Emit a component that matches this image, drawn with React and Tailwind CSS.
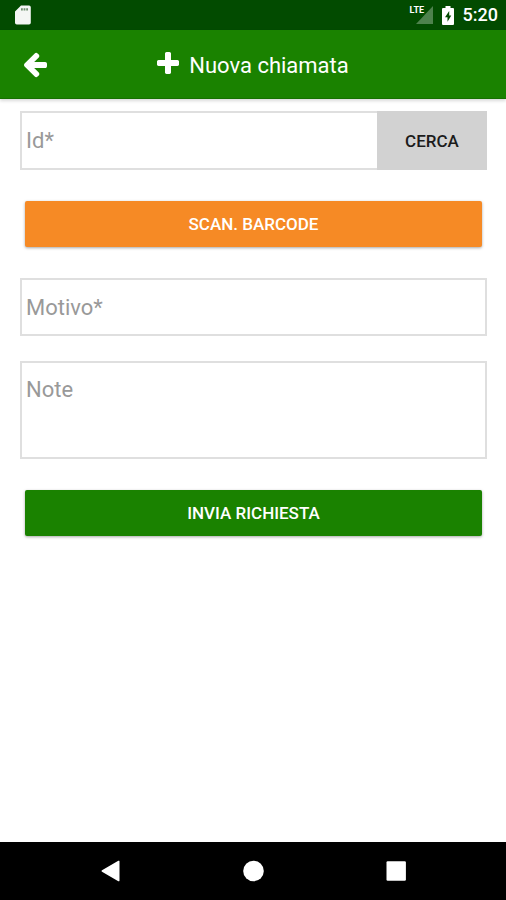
import React, { useState } from "react";

const ArrowLeftIcon = () => (
  <svg viewBox="0 0 1792 1792" className="size-7" fill="currentColor" aria-hidden="true">
    <path d="M1664 896v128q0 53-32.5 90.5t-84.5 37.5h-704l293 294q38 36 38 90t-38 90l-75 76q-37 37-90 37-52 0-91-37l-651-652q-37-37-37-90 0-52 37-91l651-650q38-38 91-38 52 0 90 38l75 74q38 38 38 91t-38 91l-293 293h704q52 0 84.5 37.5t32.5 90.5z" />
  </svg>
);

const PlusIcon = () => (
  <svg viewBox="0 0 1792 1792" className="size-7" fill="currentColor" aria-hidden="true">
    <path d="M1600 736v192q0 40-28 68t-68 28h-416v416q0 40-28 68t-68 28h-192q-40 0-68-28t-28-68v-416h-416q-40 0-68-28t-28-68v-192q0-40 28-68t68-28h416v-416q0-40 28-68t68-28h192q40 0 68 28t28 68v416h416q40 0 68 28t28 68z" />
  </svg>
);

const StatusBar = () => (
  <div className="flex h-[30px] items-center justify-between bg-[#024b00] pr-2 pl-[15px] text-white">
    <svg viewBox="0 0 16 20" className="h-5 w-4" aria-hidden="true">
      <path d="M6 0.5h8a1.8 1.8 0 0 1 1.8 1.8v15.4a1.8 1.8 0 0 1-1.8 1.8H1.8A1.8 1.8 0 0 1 0 17.7V6.5z" fill="#f4f6f4" />
      <path d="M6 3.2h1.8v2.2H6zM8.6 3.2h1.8v2.2H8.6zM11.2 3.2h1.8v2.2h-1.8z" fill="#6f8f6e" />
    </svg>
    <div className="flex items-center">
      <div className="relative h-[18px] w-[23px]">
        <svg viewBox="0 0 23 18" className="h-full w-full" aria-hidden="true">
          <path d="M23 0v18H6z" fill="#4e824d" />
        </svg>
        <span className="absolute top-0 left-0 text-[9px] leading-[9px] font-bold">LTE</span>
      </div>
      <svg viewBox="0 0 12 19" className="ml-[9px] h-[19px] w-3" aria-hidden="true">
        <path d="M3.5 0h5v2H11a1 1 0 0 1 1 1v15a1 1 0 0 1-1 1H1a1 1 0 0 1-1-1V3a1 1 0 0 1 1-1h2.5z" fill="#fff" />
        <path d="M7.200 5L3 11.300h2.500V15.800L9.300 9.500H7.200z" fill="#024b00" />
      </svg>
      <span className="ml-[9px] text-lg leading-5 font-medium">5:20</span>
    </div>
  </div>
);

const Header = () => (
  <header className="grid h-[69px] grid-cols-[1fr_auto_1fr] items-center border-b border-[#167000] bg-[#1a8200] pr-6 pl-[21px] text-white shadow-[0_2px_3px_rgba(0,0,0,0.15)]">
    <button type="button" aria-label="Indietro" className="justify-self-start">
      <ArrowLeftIcon />
    </button>
    <h1 className="flex items-start gap-[7px] pt-1 text-[22px] leading-8">
      <PlusIcon />
      Nuova chiamata
    </h1>
  </header>
);

const NavBar = () => (
  <nav className="flex h-[58px] items-center justify-center gap-[119px] bg-black text-white">
    <button type="button" aria-label="Back">
      <svg viewBox="0 0 24 24" className="size-6" fill="currentColor" aria-hidden="true">
        <path d="M21.500 2.500v19a.8.8 0 0 1-1.200.7L4 12.700a.8.8 0 0 1 0-1.400L20.300 1.800a.8.8 0 0 1 1.200.7z" />
      </svg>
    </button>
    <button type="button" aria-label="Home">
      <svg viewBox="0 0 24 24" className="size-6" fill="currentColor" aria-hidden="true">
        <circle cx="12.5" cy="12" r="10.3" />
      </svg>
    </button>
    <button type="button" aria-label="Recents">
      <svg viewBox="0 0 24 24" className="size-6" fill="currentColor" aria-hidden="true">
        <rect x="2.5" y="2.3" width="19.4" height="19.4" rx="1.2" />
      </svg>
    </button>
  </nav>
);

const fieldClass =
  "border-2 border-[#dfdfdf] bg-white px-1 text-[22px] leading-7 text-[#333] outline-none placeholder:text-[#999]";

const actionClass =
  "mx-[5px] h-[46px] rounded-xs text-[17px] leading-6 font-medium text-white shadow-[0_1px_3px_rgba(0,0,0,0.35)]";

const App = () => {
  const [form, setForm] = useState({ id: "", motivo: "", note: "" });

  const handleChange = (e) => {
    setForm({ ...form, [e.target.name]: e.target.value });
  };

  return (
    <div className="flex min-h-screen flex-col bg-white font-['Roboto',sans-serif]">
      <StatusBar />
      <Header />

      <form className="flex flex-1 flex-col pt-3 pr-[19px] pl-5" onSubmit={(e) => e.preventDefault()}>
        {/* Id + search */}
        <div className="flex h-[59px]">
          <input
            name="id"
            aria-label="Id"
            placeholder="Id*"
            value={form.id}
            onChange={handleChange}
            className={`${fieldClass} min-w-0 flex-1 border-r-0`}
          />
          <button type="button" className="w-[110px] bg-[#d2d2d2] text-[17px] leading-6 font-medium text-[#1c1c1c]">
            CERCA
          </button>
        </div>

        <button type="button" className={`${actionClass} mt-[31px] bg-[#f68a25]`}>
          SCAN. BARCODE
        </button>

        <input
          name="motivo"
          aria-label="Motivo"
          placeholder="Motivo*"
          value={form.motivo}
          onChange={handleChange}
          className={`${fieldClass} mt-[31px] h-[58px]`}
        />
        <textarea
          name="note"
          aria-label="Note"
          placeholder="Note"
          value={form.note}
          onChange={handleChange}
          className={`${fieldClass} mt-[25px] h-[98px] resize-none py-[13px]`}
        />

        <button type="submit" className={`${actionClass} mt-[31px] bg-[#1a8200]`}>
          INVIA RICHIESTA
        </button>
      </form>

      <NavBar />
    </div>
  );
};

export default App;
